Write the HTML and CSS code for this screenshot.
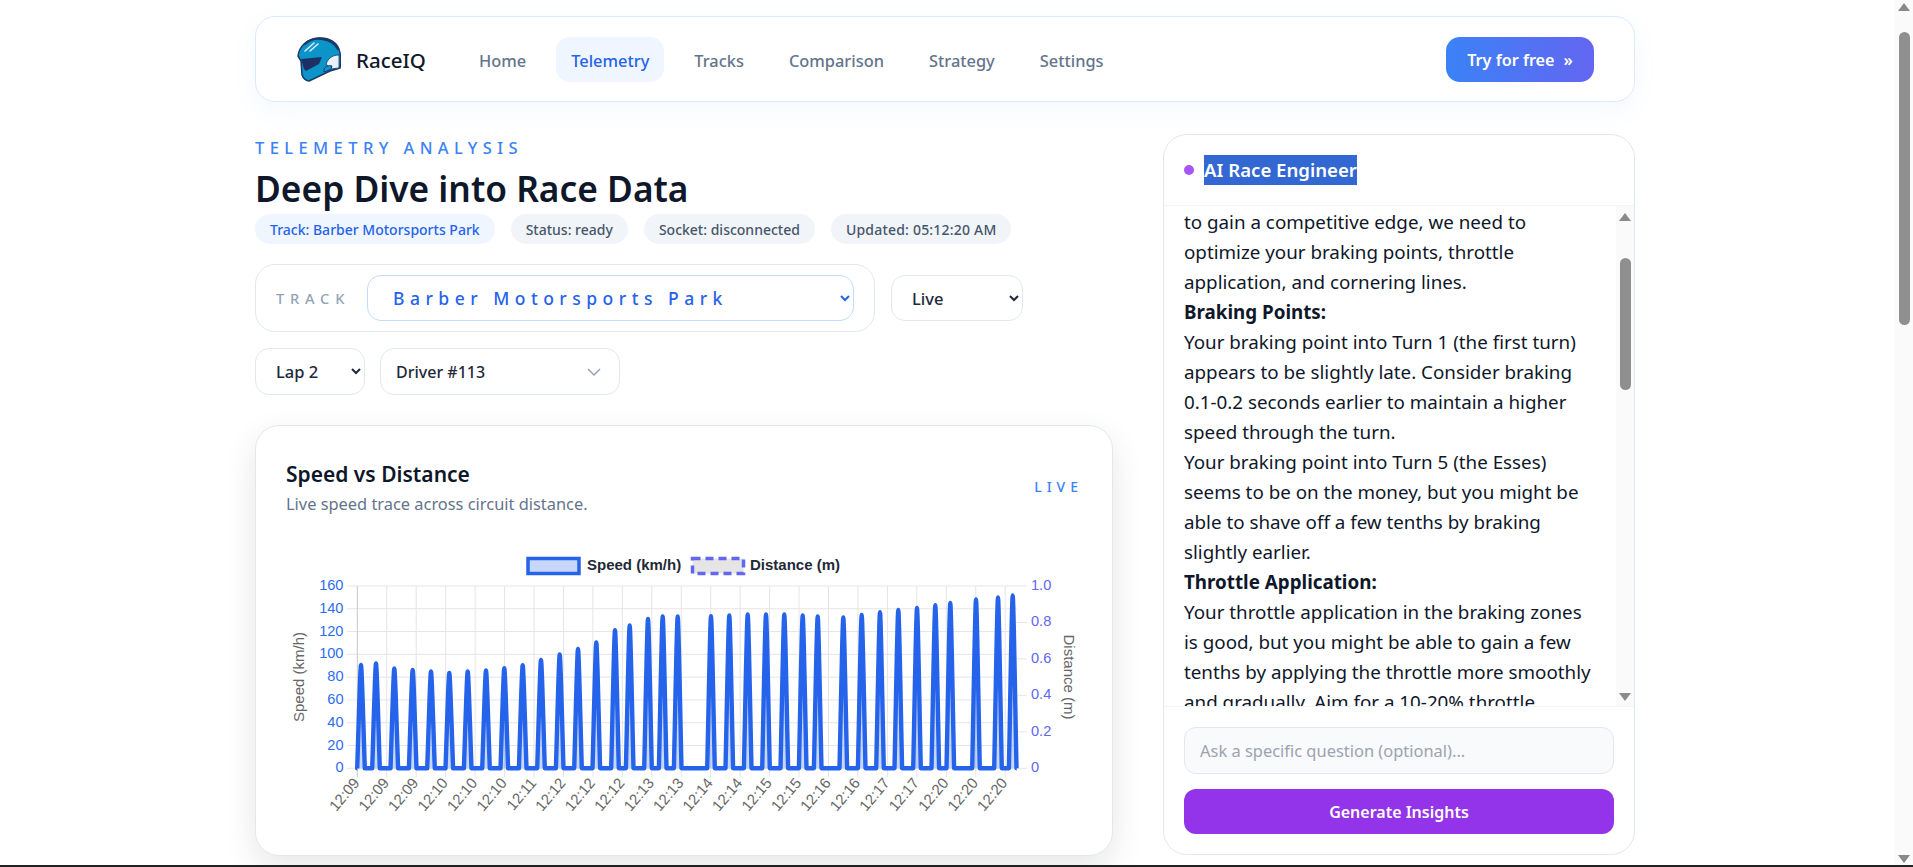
FILE: index.html
```html
<!DOCTYPE html>
<html lang="en">
<head>
<meta charset="utf-8">
<title>RaceIQ Telemetry</title>
<link rel="stylesheet" href="styles.css">
</head>
<body>
<div class="window">
  <div class="viewport">
    <div class="page">
      <nav class="nav">
        <div class="brand">
          <svg class="logo" viewBox="0 0 44 45" aria-hidden="true">
            <path class="helmet-shell" d="M1 19C2 10 9 2 22 1c10-.5 19 4 21 15 1 5 1 10 0 15l-10 3-21 10c-3 0-6-3-7-6l-1-14-3-5z"/>
            <path class="helmet-crown" d="M8 7C13 2 20 1 26 2c6 1 12 4 15 10"/>
            <path class="helmet-visor" d="M4 22l21-2-3 7-13 7-2-2z"/>
            <path class="helmet-cheek" d="M29 28c1-5 5-10 13-10v13l-9 1c-1-3-2-4-4-4z"/>
            <path class="helmet-ear" d="M27 32c2-3 5-4 8-3l-1 3-4 2-3 1z"/>
            <path class="helmet-stripe" d="M8 14l9-8M13 14l8-7"/>
          </svg>
          <span class="brand-name">RaceIQ</span>
        </div>
        <div class="nav-links">
          <a class="nav-link">Home</a>
          <a class="nav-link is-active">Telemetry</a>
          <a class="nav-link">Tracks</a>
          <a class="nav-link">Comparison</a>
          <a class="nav-link">Strategy</a>
          <a class="nav-link">Settings</a>
        </div>
        <a class="cta">Try for free <span class="cta-arrows">»</span></a>
      </nav>

      <div class="columns">
        <main class="left">
          <div class="eyebrow">TELEMETRY ANALYSIS</div>
          <h1 class="title">Deep Dive into Race Data</h1>
          <div class="pills">
            <span class="pill pill-blue">Track: Barber Motorsports Park</span>
            <span class="pill">Status: ready</span>
            <span class="pill">Socket: disconnected</span>
            <span class="pill pill-time">Updated: 05:12:20 AM</span>
          </div>
          <div class="filters">
            <div class="track-box">
              <span class="track-label">TRACK</span>
              <select class="select select-track"><option>Barber Motorsports Park</option></select>
            </div>
            <select class="select select-mode"><option>Live</option></select>
          </div>
          <div class="filters-2">
            <select class="select select-lap"><option>Lap 2</option></select>
            <div class="driver">
              <span>Driver #113</span>
              <svg class="driver-chevron" viewBox="0 0 16 10" aria-hidden="true"><path d="M2 2l6 6 6-6"/></svg>
            </div>
          </div>
          <section class="chart-card">
            <div class="chart-head">
              <div>
                <h2 class="chart-title">Speed vs Distance</h2>
                <p class="chart-sub">Live speed trace across circuit distance.</p>
              </div>
              <span class="live">LIVE</span>
            </div>
            <svg id="chart" class="chart" viewBox="285 548 800 290" width="800" height="290"></svg>
          </section>
        </main>

        <aside class="ai-card">
          <header class="ai-head">
            <span class="ai-dot"></span>
            <span class="ai-title">AI Race Engineer</span>
          </header>
          <div class="ai-body">
            <div class="ai-text">
              to gain a competitive edge, we need to<br>
              optimize your braking points, throttle<br>
              application, and cornering lines.<br>
              <strong>Braking Points:</strong><br>
              Your braking point into Turn 1 (the first turn)<br>
              appears to be slightly late. Consider braking<br>
              0.1-0.2 seconds earlier to maintain a higher<br>
              speed through the turn.<br>
              Your braking point into Turn 5 (the Esses)<br>
              seems to be on the money, but you might be<br>
              able to shave off a few tenths by braking<br>
              slightly earlier.<br>
              <strong>Throttle Application:</strong><br>
              Your throttle application in the braking zones<br>
              is good, but you might be able to gain a few<br>
              tenths by applying the throttle more smoothly<br>
              and gradually. Aim for a 10-20% throttle
            </div>
            <div class="scroll scroll-inner">
              <span class="arrow-up"></span>
              <div class="scroll-track"><span class="thumb thumb-inner"></span></div>
              <span class="arrow-down"></span>
            </div>
          </div>
          <footer class="ai-foot">
            <input class="ai-input" type="text" placeholder="Ask a specific question (optional)...">
            <button class="ai-button" type="button">Generate Insights</button>
          </footer>
        </aside>
      </div>
    </div>
    <div class="scroll scroll-page">
      <span class="arrow-up"></span>
      <div class="scroll-track"><span class="thumb thumb-page"></span></div>
      <span class="arrow-down"></span>
    </div>
  </div>
  <div class="edge"></div>
</div>
<script src="chart.js"></script>
</body>
</html>
```
FILE: styles.css
```css
* { box-sizing: border-box; }
html, body { margin: 0; height: 100%; overflow: hidden; background: #fff; }
body { font-family: "Noto Sans", "Open Sans", sans-serif; color: #0f172a; }
.window { height: 867px; display: flex; flex-direction: column; }
.viewport { height: 865px; display: flex; flex: none; overflow: hidden; }
.edge { height: 2px; background: #222; flex: none; }
.page { flex: 1; padding: 16px 0 0 255px; overflow: hidden; }

/* nav */
.nav { width: 1380px; height: 86px; display: flex; align-items: center; padding: 0 40px 0 41px; background: #fff; border: 1px solid #dbeafe; border-radius: 20px; box-shadow: 0 8px 24px rgba(59, 130, 246, .06); }
.brand { display: flex; align-items: center; gap: 15px; width: 167px; }
.logo { width: 44px; height: 45px; flex: none; }
.helmet-shell { fill: #0a94c8; stroke: #1b3a6b; stroke-width: 1.5; stroke-linejoin: round; }
.helmet-crown { fill: none; stroke: #1b3a6b; stroke-width: 2.4; stroke-linecap: round; }
.helmet-visor { fill: #1e2f66; }
.helmet-cheek { fill: #e8f0fa; stroke: #1b3a6b; stroke-width: .8; }
.helmet-ear { fill: #0a94c8; stroke: #1b3a6b; stroke-width: 1; }
.helmet-stripe { fill: none; stroke: #dbeafe; stroke-width: 1.6; stroke-linecap: round; }
.brand-name { padding-top: 1px; font-size: 20.5px; font-weight: 500; }
.nav-links { display: flex; align-items: center; gap: 15px; }
.nav-link { height: 45px; display: flex; align-items: center; padding: 2px 15px 0; border-radius: 14px; font-size: 16.4px; font-weight: 500; color: #64748b; }
.nav-link.is-active { background: #eff6ff; color: #2563eb; }
.cta { margin-left: auto; width: 148px; height: 45px; display: flex; align-items: center; justify-content: center; gap: 9px; padding-top: 1px; border-radius: 14px; background: linear-gradient(90deg, #3b82f6, #6366f1); color: #fff; font-size: 16.2px; font-weight: 600; }

/* columns */
.columns { width: 1380px; margin-top: 32px; display: grid; grid-template-columns: 858px 472px; column-gap: 50px; align-items: start; }
.eyebrow { height: 26px; line-height: 27px; font-size: 16.5px; font-weight: 500; letter-spacing: 5.4px; color: #3b82f6; white-space: nowrap; }
.title { margin: 6px 0 0; height: 48px; line-height: 45px; font-size: 35.3px; font-weight: 600; color: #0f172a; white-space: nowrap; }
.pills { display: flex; gap: 16px; }
.pill { height: 30px; padding: 0 15px; display: flex; align-items: center; border-radius: 15px; background: #f1f5f9; color: #475569; font-size: 14px; font-weight: 500; white-space: nowrap; }
.pill-blue { background: #eff6ff; color: #2563eb; }
.pill-time { letter-spacing: .2px; }

.filters { margin-top: 20px; display: flex; align-items: center; gap: 16px; }
.track-box { width: 620px; height: 68px; display: flex; align-items: center; gap: 20px; padding: 0 20px; border: 1px solid #e2e8f0; border-radius: 20px; }
.track-label { width: 71px; flex: none; font-size: 14.6px; font-weight: 500; letter-spacing: 5.8px; color: #94a3b8; }
.select { height: 46px; padding: 0 0 0 16px; border: 1px solid #e2e8f0; border-radius: 14px; background: #fff; font-family: inherit; font-size: 16.5px; font-weight: 500; color: #1e293b; }
.select-track { width: 487px; padding-left: 21px; border-color: #bfdbfe; color: #2563eb; font-size: 17.5px; letter-spacing: 5.5px; font-weight: 500; }
.select-mode { width: 132px; }
.filters-2 { margin-top: 16px; display: flex; gap: 15px; }
.select-lap { width: 110px; height: 47px; }
.driver { width: 240px; height: 47px; display: flex; align-items: center; justify-content: space-between; padding: 0 17px 0 15px; border: 1px solid #e2e8f0; border-radius: 14px; font-size: 16px; font-weight: 500; color: #1e293b; }
.driver-chevron { width: 16px; height: 10px; fill: none; stroke: #94a3b8; stroke-width: 1.5; }

.chart-card { margin-top: 30px; width: 858px; height: 431px; padding: 33px 29px 0 30px; border: 1px solid #e2e8f0; border-radius: 24px; background: #fff; box-shadow: 0 12px 32px rgba(15, 23, 42, .1); }
.chart-head { height: 89px; display: flex; justify-content: space-between; align-items: flex-start; }
.chart-title { margin: 0; line-height: 31px; font-size: 21px; font-weight: 600; color: #0f172a; }
.chart-sub { margin: 0; line-height: 28px; font-size: 16.4px; color: #64748b; }
.live { margin-top: 18px; font-size: 14px; font-weight: 500; letter-spacing: 5px; color: #3b82f6; }
.chart { display: block; }
.grid-line { stroke: #e5e5e5; stroke-width: 1; }
.axis-line { stroke: #c9c9c9; stroke-width: 1; }
.trace-fill { fill: rgba(37, 99, 235, .25); stroke: none; }
.trace-line { fill: none; stroke: #2563eb; stroke-width: 4.4; stroke-linejoin: round; }
.tick-left { font: 14.6px "Liberation Sans", sans-serif; fill: #2f6df0; text-anchor: end; }
.tick-right { font: 14.6px "Liberation Sans", sans-serif; fill: #6366f1; }
.tick-x { font: 15px "Liberation Sans", sans-serif; fill: #666; text-anchor: end; }
.axis-title { font: 15px "Liberation Sans", sans-serif; fill: #666; text-anchor: middle; }
.legend-text { font: bold 15px "Liberation Sans", sans-serif; fill: #1f2937; }
.legend-speed { fill: #c7d7f9; stroke: #2563eb; stroke-width: 3.5; }
.legend-dist { fill: #e5e5e5; stroke: #6366f1; stroke-width: 3.5; stroke-dasharray: 8 5; }

/* AI card */
.ai-card { height: 721px; border: 1px solid #e2e8f0; border-radius: 24px; background: #fff; display: flex; flex-direction: column; overflow: hidden; }
.ai-head { height: 71px; flex: none; display: flex; align-items: center; gap: 10px; padding: 0 20px; border-bottom: 1px solid #f1f5f9; }
.ai-dot { width: 10px; height: 10px; border-radius: 50%; background: #a855f7; }
.ai-title { height: 30px; line-height: 30px; background: #3367d1; color: #fff; font-size: 18.6px; font-weight: 600; white-space: nowrap; }
.ai-body { height: 500px; flex: none; display: flex; overflow: hidden; }
.ai-text { flex: 1; padding: 1px 0 0 20px; font-size: 18.8px; line-height: 30px; color: #0f172a; white-space: nowrap; overflow: hidden; }
.ai-text strong { font-weight: 700; }
.scroll { width: 18px; flex: none; display: flex; flex-direction: column; align-items: center; background: #fafafa; }
.scroll-track { flex: 1; width: 100%; display: flex; justify-content: center; align-items: flex-start; }
.arrow-up, .arrow-down { width: 0; height: 0; flex: none; border-left: 6px solid transparent; border-right: 6px solid transparent; }
.arrow-up { margin: 7px 0 6px; border-bottom: 8px solid #8a8a8a; }
.arrow-down { margin: 6px 0 5px; border-top: 8px solid #8a8a8a; }
.scroll-page .arrow-up { margin-top: 3px; }
.scroll-page .arrow-down { margin-bottom: 2px; }
.thumb { display: block; width: 11px; border-radius: 6px; background: #8f8f8f; }
.thumb-inner { height: 132px; margin-top: 31px; }
.thumb-page { height: 293px; margin-top: 15px; }
.ai-foot { flex: 1; display: flex; flex-direction: column; gap: 15px; padding: 20px 20px 0; border-top: 1px solid #f1f5f9; }
.ai-input { width: 430px; height: 47px; flex: none; padding: 0 15px; border: 1px solid #e2e8f0; border-radius: 12px; background: #f8fafc; font-family: inherit; font-size: 16.45px; }
.ai-input::placeholder { color: #9ca3af; opacity: 1; }
.ai-button { width: 430px; height: 45px; flex: none; border: 0; border-radius: 12px; background: #9333ea; color: #fff; font-family: inherit; font-size: 16px; font-weight: 600; }
```
FILE: chart.js
```js
(function () {
  var svg = document.getElementById('chart');
  var NS = 'http://www.w3.org/2000/svg';
  function el(tag, attrs, text) {
    var n = document.createElementNS(NS, tag);
    for (var k in attrs) n.setAttribute(k, attrs[k]);
    if (text !== undefined) n.textContent = text;
    svg.appendChild(n);
    return n;
  }
  var L = 356.3, R = 1015.7, T = 586, B = 768.3, STEP = 29.45;
  var labels = ['12:09','12:09','12:09','12:10','12:10','12:10','12:11','12:12','12:12','12:12','12:13','12:13',
                '12:14','12:14','12:15','12:15','12:16','12:16','12:17','12:17','12:20','12:20','12:20'];
  var peaks = [[360,662.7],[375,661.3],[393.3,666.3],[411.7,667.7],[430,669.3],[448.3,670.7],[466.7,669.3],[485,668.3],
    [503.3,666],[521.7,663],[540,657.7],[558.7,652.3],[577,646.7],[595.3,640.3],[614,628],[628.7,623.3],[647,616.7],[661.7,614.3],
    [676.7,614.3],[710,614],[728.3,613.3],[746.7,612.3],[765,612.3],[783.3,612.3],[801.7,613.3],[816.7,614.3],[842.3,615.3],
    [860.7,612.7],[879,610],[897.3,607.7],[916,605.7],[934.3,603],[949.3,600.7],[975,597.3],[997,595.3],[1011.7,593.3]];

  // horizontal grid + left ticks
  for (var i = 0; i <= 8; i++) {
    var y = T + (B - T) * i / 8;
    el('line', { x1: 346, x2: R, y1: y, y2: y, 'class': 'grid-line' });
    el('text', { x: 342.5, y: y + 4, 'class': 'tick-left' }, String(160 - i * 20));
  }
  // vertical grid + x labels
  labels.forEach(function (t, i) {
    var x = L + i * STEP;
    el('line', { x1: x, x2: x, y1: T, y2: B + 9, 'class': i === 0 ? 'axis-line' : 'grid-line' });
    el('text', { x: 0, y: 0, 'class': 'tick-x', transform: 'translate(' + (x + 3) + ' ' + (B + 15) + ') rotate(-50)' }, t);
  });
  // right axis
  ['1.0','0.8','0.6','0.4','0.2','0'].forEach(function (t, i) {
    var y = T + (B - T) * i / 5;
    el('line', { x1: R, x2: R + 10, y1: y, y2: y, 'class': 'grid-line' });
    el('text', { x: 1030, y: y + 4, 'class': 'tick-right' }, t);
  });
  // trace
  var d = 'M' + L + ' ' + B;
  peaks.forEach(function (p) {
    var x = p[0], top = p[1] + 2.2, h = B - top;
    d += 'L' + (x - 3.8) + ' ' + B +
      'C' + (x - 2.7) + ' ' + (B - h * .3) + ' ' + (x - .8) + ' ' + top + ' ' + x + ' ' + top +
      'C' + (x + .8) + ' ' + top + ' ' + (x + 2.7) + ' ' + (B - h * .3) + ' ' + (x + 3.8) + ' ' + B;
  });
  d += 'L' + R + ' ' + B;
  el('path', { d: d + 'Z', 'class': 'trace-fill' });
  el('path', { d: d, 'class': 'trace-line' });

  // axis titles
  el('text', { x: 0, y: 0, 'class': 'axis-title', transform: 'translate(303 677) rotate(-90)' }, 'Speed (km/h)');
  el('text', { x: 0, y: 0, 'class': 'axis-title', transform: 'translate(1063 677) rotate(90)' }, 'Distance (m)');

  // legend
  el('rect', { x: 527, y: 558.5, width: 51, height: 15, 'class': 'legend-speed' });
  el('text', { x: 586, y: 570, 'class': 'legend-text' }, 'Speed (km/h)');
  el('rect', { x: 691.5, y: 558.5, width: 51, height: 15, 'class': 'legend-dist' });
  el('text', { x: 749, y: 570, 'class': 'legend-text' }, 'Distance (m)');
})();
```
